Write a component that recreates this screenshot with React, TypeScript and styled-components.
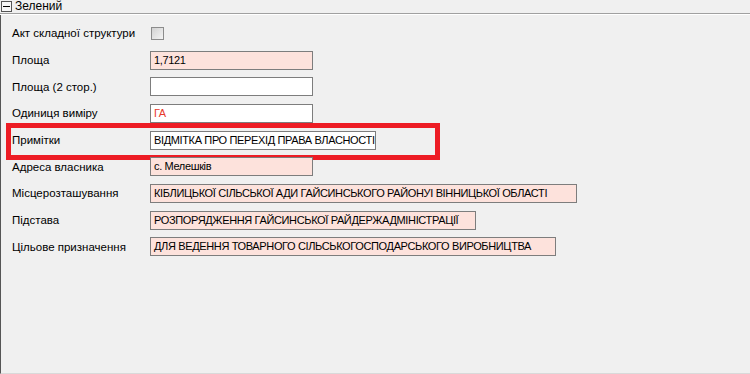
import React from 'react';
import styled, { createGlobalStyle } from 'styled-components';

const GlobalStyle = createGlobalStyle`
  html, body {
    margin: 0;
    padding: 0;
    background: #f0f0f0;
  }
  body {
    font-family: "Liberation Sans", Arial, sans-serif;
    font-size: 12px;
    color: #000;
  }
`;

const Page = styled.div`
  width: 750px;
  height: 374px;
  display: flex;
  flex-direction: column;
  background: #f0f0f0;
  overflow: hidden;
`;

const Header = styled.div`
  height: 13px;
  display: flex;
  align-items: flex-start;
  gap: 3px;
  padding-left: 1px;
  border-bottom: 1px solid #a0a0a0;
  box-shadow: 0 1px 0 #fff;
  line-height: 12px;
`;

const Toggle = styled.span`
  width: 9px;
  height: 9px;
  margin-top: 1px;
  border: 1px solid #555;
  background: #f7f7f7;
  display: flex;
  align-items: center;
  justify-content: center;

  &::before {
    content: '';
    width: 7px;
    height: 1px;
    background: #000;
  }
`;

const Panel = styled.div`
  flex: 1;
  margin-top: 1px;
  border-left: 1px solid #555;
  border-bottom: 1px solid #d9d9d9;
  padding-top: 5px;
`;

const Row = styled.div<{ $highlight?: boolean }>`
  position: relative;
  height: 26.7px;
  display: flex;
  align-items: center;

  ${({ $highlight }) =>
    $highlight &&
    `
    &::after {
      content: '';
      position: absolute;
      left: 5px;
      top: -4px;
      width: 434px;
      height: 37px;
      box-sizing: border-box;
      border: 5px solid #ed1c24;
      pointer-events: none;
    }
  `}
`;

const Label = styled.div`
  width: 138px;
  padding-left: 11px;
  font-size: 11.5px;
  white-space: nowrap;
`;

const Field = styled.div<{ $width?: number; $tone?: 'pink' | 'white'; $red?: boolean }>`
  width: ${({ $width }) => $width ?? 163}px;
  height: 19px;
  box-sizing: border-box;
  border: 1px solid #7d7d7d;
  background: ${({ $tone }) => ($tone === 'white' ? '#ffffff' : '#fde2dc')};
  color: ${({ $red }) => ($red ? '#e8392b' : '#000')};
  padding: 0 2px 0 3px;
  font-size: 11px;
  letter-spacing: -0.36px;
  line-height: 17px;
  white-space: nowrap;
  overflow: hidden;
`;

const CheckBox = styled.span`
  width: 11px;
  height: 11px;
  margin-left: 1px;
  border: 1px solid #8c8c8c;
  background: linear-gradient(135deg, #d2d2d2 0%, #f4f4f4 100%);
`;

type FieldRow = {
  label: string;
  value: string;
  width?: number;
  tone?: 'pink' | 'white';
  red?: boolean;
  highlight?: boolean;
};

const rows: FieldRow[] = [
  { label: 'Площа', value: '1,7121' },
  { label: 'Площа (2 стор.)', value: '', tone: 'white' },
  { label: 'Одиниця виміру', value: 'ГА', tone: 'white', red: true },
  { label: 'Примітки', value: 'ВІДМІТКА ПРО ПЕРЕХІД ПРАВА ВЛАСНОСТІ', tone: 'white', width: 226, highlight: true },
  { label: 'Адреса власника', value: 'с. Мелешків' },
  { label: 'Місцерозташування', value: 'КІБЛИЦЬКОЇ СІЛЬСЬКОЇ АДИ ГАЙСИНСЬКОГО РАЙОНУІ ВІННИЦЬКОЇ ОБЛАСТІ', width: 427 },
  { label: 'Підстава', value: 'РОЗПОРЯДЖЕННЯ ГАЙСИНСЬКОЇ РАЙДЕРЖАДМІНІСТРАЦІЇ', width: 326 },
  { label: 'Цільове призначення', value: 'ДЛЯ ВЕДЕННЯ ТОВАРНОГО СІЛЬСЬКОГОСПОДАРСЬКОГО ВИРОБНИЦТВА', width: 406 },
];

const App: React.FC = () => {
  return (
    <Page>
      <GlobalStyle />
      <Header>
        <Toggle />
        <span>Зелений</span>
      </Header>
      <Panel>
        <Row>
          <Label>Акт складної структури</Label>
          <CheckBox />
        </Row>
        {rows.map((r) => (
          <Row key={r.label} $highlight={r.highlight}>
            <Label>{r.label}</Label>
            <Field $width={r.width} $tone={r.tone} $red={r.red}>
              {r.value}
            </Field>
          </Row>
        ))}
      </Panel>
    </Page>
  );
};

export default App;
